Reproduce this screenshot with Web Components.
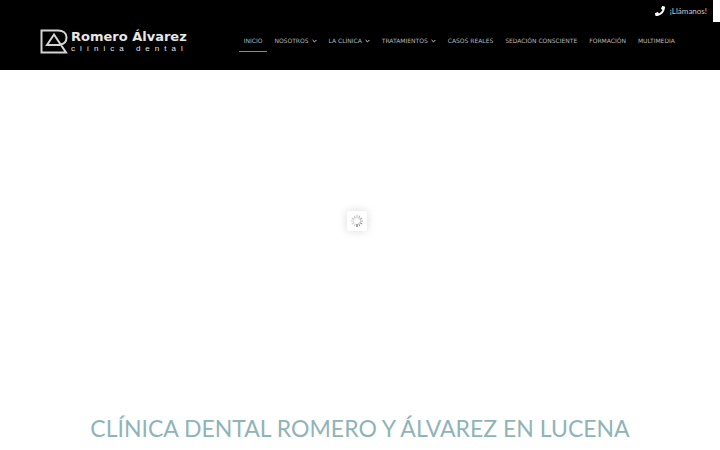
<!DOCTYPE html>
<html lang="es">
<head>
<meta charset="UTF-8">
<meta name="viewport" content="width=device-width, initial-scale=1">
<title>Clínica Dental Romero y Álvarez</title>
<style>
  body {
    margin: 0;
    background: #fff;
    font-family: Lato, "Liberation Sans", sans-serif;
  }
</style>
</head>
<body>
<clinic-page></clinic-page>

<script>
// Barra superior con el teléfono
class CallBar extends HTMLElement {
  constructor() {
    super();
    this.attachShadow({ mode: "open" });
  }

  connectedCallback() {
    this.shadowRoot.innerHTML = `
      <style>
        :host {
          display: block;
          background: #fff;
          padding-right: 7px;
        }
        .bar {
          display: flex;
          justify-content: flex-end;
          align-items: center;
          height: 22px;
          padding-right: 6px;
          background: #000;
        }
        a {
          display: flex;
          align-items: center;
          gap: 5px;
          color: #c8c8c8;
          font-size: 8px;
          line-height: 12px;
          text-decoration: none;
        }
        svg {
          width: 10px;
          height: 10px;
          fill: #fff;
        }
      </style>
      <div class="bar">
        <a href="#llamar">
          <svg viewBox="0 0 512 512" aria-hidden="true"><path d="M493 25 389 1c-11-3-23 3-28 14l-48 112c-4 10-1 22 7 28l61 50c-36 76-99 140-177 177l-50-61c-7-8-18-11-28-7L14 362c-11 5-17 17-14 28l24 104c3 11 12 18 24 18 256 0 464-207 464-464 0-11-8-21-19-23z"/></svg>
          <span><slot></slot></span>
        </a>
      </div>
    `;
  }
}
customElements.define("call-bar", CallBar);

// Logotipo
class BrandLogo extends HTMLElement {
  constructor() {
    super();
    this.attachShadow({ mode: "open" });
  }

  connectedCallback() {
    this.shadowRoot.innerHTML = `
      <style>
        :host {
          display: block;
          flex: none;
        }
        a {
          display: flex;
          align-items: flex-end;
          gap: 3px;
          color: #e6e6e6;
          text-decoration: none;
          white-space: nowrap;
        }
        svg {
          flex: none;
          width: 28px;
          height: 26px;
          fill: none;
          stroke: #d4d4d4;
          stroke-width: 2;
        }
        .words {
          display: flex;
          flex-direction: column;
        }
        .name {
          font-family: "DejaVu Sans", sans-serif;
          font-size: 13px;
          line-height: 14px;
          font-weight: 700;
        }
        .tag {
          margin-right: -5px;
          font-family: "Liberation Sans", sans-serif;
          font-size: 8px;
          line-height: 10px;
          letter-spacing: 5px;
        }
      </style>
      <a href="#inicio">
        <svg viewBox="0 0 28 26" aria-hidden="true">
          <path d="M20 16.500C24.500 16 26.500 13 26.500 9.500 26.500 5 23 2.500 18 2.500H1.500V24.500H26L14 6.500 7 17H20"/>
        </svg>
        <span class="words">
          <span class="name">Romero Álvarez</span>
          <span class="tag">clínica dental</span>
        </span>
      </a>
    `;
  }
}
customElements.define("brand-logo", BrandLogo);

// Enlace del menú; el atributo "submenu" añade la flecha
class NavLink extends HTMLElement {
  constructor() {
    super();
    this.attachShadow({ mode: "open" });
  }

  connectedCallback() {
    const arrow = this.hasAttribute("submenu")
      ? `<svg viewBox="0 0 5 4" aria-hidden="true"><path d="M.6 1 2.500 2.900 4.400 1"/></svg>`
      : "";
    this.shadowRoot.innerHTML = `
      <style>
        :host { display: block; }
        a {
          display: flex;
          align-items: center;
          gap: 3px;
          padding: 6px 5px 5px;
          border-bottom: 1px solid transparent;
          color: #b8b8b8;
          font-family: "DejaVu Sans", sans-serif;
          font-size: 6px;
          line-height: 10px;
          text-decoration: none;
          white-space: nowrap;
        }
        :host([active]) a { border-color: #8a8a8a; }
        svg {
          width: 5px;
          height: 4px;
          fill: none;
          stroke: #d8d8d8;
        }
      </style>
      <a href="${this.getAttribute("to")}"><span><slot></slot></span>${arrow}</a>
    `;
  }
}
customElements.define("nav-link", NavLink);

// Cabecera: logotipo y menú principal
class SiteHeader extends HTMLElement {
  constructor() {
    super();
    this.attachShadow({ mode: "open" });
  }

  connectedCallback() {
    this.shadowRoot.innerHTML = `
      <style>
        :host {
          display: block;
          background: #000;
        }
        header {
          display: flex;
          align-items: center;
          gap: 52px;
          padding: 6px 40px 16px;
        }
        nav {
          flex: 1;
          display: flex;
          justify-content: space-between;
        }
      </style>
      <header>
        <brand-logo></brand-logo>
        <nav aria-label="Principal">
          <nav-link to="#inicio" active>INICIO</nav-link>
          <nav-link to="#nosotros" submenu>NOSOTROS</nav-link>
          <nav-link to="#clinica" submenu>LA CLÍNICA</nav-link>
          <nav-link to="#tratamientos" submenu>TRATAMIENTOS</nav-link>
          <nav-link to="#casos">CASOS REALES</nav-link>
          <nav-link to="#sedacion">SEDACIÓN CONSCIENTE</nav-link>
          <nav-link to="#formacion">FORMACIÓN</nav-link>
          <nav-link to="#multimedia">MULTIMEDIA</nav-link>
        </nav>
      </header>
    `;
  }
}
customElements.define("site-header", SiteHeader);

// Zona del slider mientras carga
class SliderLoader extends HTMLElement {
  constructor() {
    super();
    this.attachShadow({ mode: "open" });
  }

  connectedCallback() {
    let spokes = "";
    for (let i = 0; i < 12; i++) {
      // el radio más oscuro es el inferior
      const opacity = i === 6 ? 1 : 0.2 + 0.4 * (((i + 5) % 12) / 11);
      spokes += `<path d="M10 4V7" transform="rotate(${i * 30} 10 10)" opacity="${opacity.toFixed(2)}"/>`;
    }
    this.shadowRoot.innerHTML = `
      <style>
        :host {
          display: flex;
          align-items: center;
          justify-content: center;
          height: 302px;
          padding-right: 7px;
          background: #fff;
        }
        .box {
          display: flex;
          width: 20px;
          height: 20px;
          border-radius: 2px;
          background: #fff;
          box-shadow: 0 0 10px rgba(0, 0, 0, 0.15);
        }
        svg {
          width: 20px;
          height: 20px;
          stroke: #333;
          stroke-width: 0.9;
        }
      </style>
      <div class="box" role="status" aria-label="Cargando">
        <svg viewBox="0 0 20 20" aria-hidden="true">${spokes}</svg>
      </div>
    `;
  }
}
customElements.define("slider-loader", SliderLoader);

class SectionTitle extends HTMLElement {
  constructor() {
    super();
    this.attachShadow({ mode: "open" });
  }

  connectedCallback() {
    this.shadowRoot.innerHTML = `
      <style>
        :host { display: block; }
        h1 {
          margin: 0;
          padding: 40px 20px 6px;
          color: #8fb4b8;
          font-size: 23px;
          line-height: 32px;
          font-weight: 400;
          text-align: center;
        }
      </style>
      <h1><slot></slot></h1>
    `;
  }
}
customElements.define("section-title", SectionTitle);

class ClinicPage extends HTMLElement {
  constructor() {
    super();
    this.attachShadow({ mode: "open" });
  }

  connectedCallback() {
    this.shadowRoot.innerHTML = `
      <style>
        :host { display: block; }
      </style>
      <call-bar>¡Llámanos!</call-bar>
      <site-header></site-header>
      <main>
        <slider-loader></slider-loader>
        <section-title>CLÍNICA DENTAL ROMERO Y ÁLVAREZ EN LUCENA</section-title>
      </main>
    `;
  }
}
customElements.define("clinic-page", ClinicPage);
</script>
</body>
</html>
